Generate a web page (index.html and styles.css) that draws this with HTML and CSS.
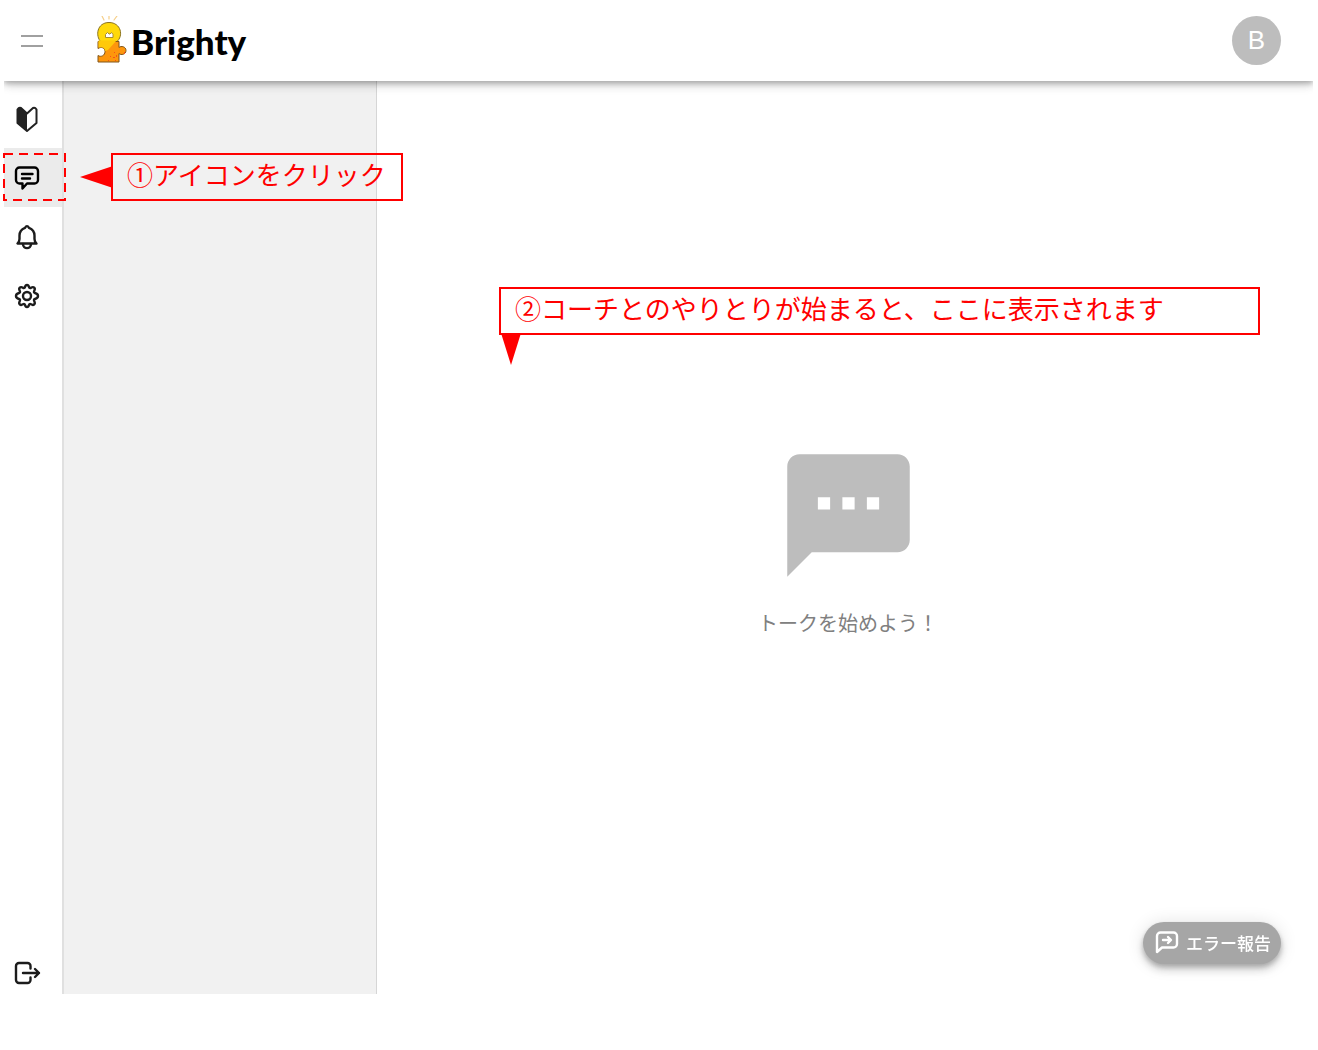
FILE: index.html
```
<!DOCTYPE html>
<html lang="ja">
<head>
<meta charset="UTF-8">
<meta name="viewport" content="width=device-width, initial-scale=1">
<title>Brighty</title>
<link rel="stylesheet" href="styles.css">
</head>
<body>

<div class="app">
  <header class="header">
    <button class="menu-btn" aria-label="メニュー">
      <span></span>
      <span></span>
    </button>
    <a class="logo" href="#">
      <svg class="logo-mark" viewBox="0 0 32 50" aria-hidden="true">
        <g stroke="#f6cf8a" stroke-width="1.2" stroke-linecap="round">
          <path d="M6 0l2 4M13 0v3M21 0l-3 4"/>
        </g>
        <path d="M5 26C-1 20 1 6.500 13 6.500S28 20 20.500 26z" fill="#ffd90a" stroke="#8a7320"/>
        <path d="M2 25.500H23v6c2-2 7-1 7 3s-5 5-7 3v8.500H2V39.500c3 2 7 0 7-4s-4-5-7-3z" fill="#fd960c" stroke="#80551a"/>
        <path d="M2.500 24.500h18L12 34 9 35q0-5-6.500-3.500z" fill="#ffc90a"/>
        <path d="M9.500 21.500v-3l2-2 1.500 1.500h1l1.500-1.500 1.500 2v3z" fill="#fff" stroke="#a58b35"/>
        <path d="M14 40h1v1h-1zM18 36h1v1h-1zM17 41h2v1h-2zM20 39h1v2h-1zM19 44h1v1h-1zM28 36h1v2h-1zM12 44h1v1h-1z" fill="#f4511e"/>
      </svg>
      <span class="logo-text">Brighty</span>
    </a>
    <button class="avatar">B</button>
  </header>

  <div class="body">
    <nav class="sidebar">
      <a class="nav-item" href="#" aria-label="はじめに">
        <svg viewBox="0 0 24 26">
          <path d="M2.500 3.500Q4 1 6 2l6 5.500L18 2q2-1 3.500 1.500V17L12 25 2.500 17z" fill="#fff" stroke="#222" stroke-width="2" stroke-linejoin="round"/>
          <path d="M2.500 3.500Q4 1 6 2l6 5.500V25L2.500 17z" fill="#222"/>
        </svg>
      </a>
      <a class="nav-item active" href="#" aria-label="トーク">
        <svg viewBox="0 0 24 26" class="line">
          <path d="M4.500 2.500h15a3.500 3.500 0 0 1 3.500 3.500v9a3.500 3.500 0 0 1-3.500 3.500H12L7.500 23.500v-5h-3A3.500 3.500 0 0 1 1 15V6a3.500 3.500 0 0 1 3.500-3.500z"/>
          <path d="M7 9h10.500M7 13.500h8"/>
        </svg>
      </a>
      <a class="nav-item" href="#" aria-label="お知らせ">
        <svg viewBox="0 0 24 26" class="line">
          <path d="M2.500 19.500h19q-2-2-2-4.500v-3.500c0-4-2.500-6.500-5.500-7.700Q12 .5 10 3.800C7 5 4.500 7.500 4.500 11.500V15q0 2.500-2 4.500z"/>
          <path d="M8 20c0 5.500 8 5.500 8 0"/>
        </svg>
      </a>
      <a class="nav-item" href="#" aria-label="設定">
        <svg viewBox="0 0 24 26" class="line">
          <path d="M12 2Q13.500 2 14 4q.5 1.500 2 .8 2-1.300 3.200-.1t0 3.300q-.7 1.500.8 2 3 .8 3 3t-3 3q-1.500.5-.8 2 1.200 2.100 0 3.300t-3.200 0q-1.500-.8-2 .7-.5 2-2 2t-2-2q-.5-1.500-2-.7-2 1.200-3.200 0t0-3.300q.7-1.500-.8-2-3-.8-3-3t3-3q1.500-.5.800-2-1.200-2.100 0-3.300t3.200.1q1.500.7 2-.8.500-2 2-2z"/>
          <circle cx="12" cy="13" r="4"/>
        </svg>
      </a>
      <a class="nav-item logout" href="#" aria-label="ログアウト">
        <svg viewBox="0 0 24 26" class="line">
          <path d="M15.500 8.500V6A3 3 0 0 0 12.500 3H4a3 3 0 0 0-3 3v14a3 3 0 0 0 3 3h8.500a3 3 0 0 0 3-3v-2.500"/>
          <path d="M8 13h16M20 9l4 4-4 4"/>
        </svg>
      </a>
      <svg class="marker" aria-hidden="true"><rect x="1" y="1" width="61" height="46"/></svg>
      <p class="callout callout-icon">①アイコンをクリック</p>
    </nav>

    <aside class="talk-list"></aside>

    <main class="talk">
      <p class="callout callout-talk">②コーチとのやりとりが始まると、ここに表示されます</p>
      <svg class="talk-icon" viewBox="0 0 24 24" aria-hidden="true">
        <path d="M20 2H4c-1.100 0-2 .9-2 2v18l4-4h14c1.100 0 2-.9 2-2V4c0-1.100-.9-2-2-2zM9 11H7V9h2v2zm4 0h-2V9h2v2zm4 0h-2V9h2v2z"/>
      </svg>
      <p class="talk-text">トークを始めよう！</p>
    </main>
  </div>
</div>

<button class="report">
  <svg viewBox="0 0 24 24" aria-hidden="true">
    <path d="M2 22V6a3.500 3.500 0 0 1 3.500-3.500h13A3.500 3.500 0 0 1 22 6v8a3.500 3.500 0 0 1-3.500 3.500H7z"/>
    <path d="M8 10h7.500M13 7l3 3-3 3"/>
  </svg>
  エラー報告
</button>

</body>
</html>
```
FILE: styles.css
```
* {
  box-sizing: border-box;
}
body {
  margin: 0;
  background: #fff;
  font-family: "Liberation Sans", "Noto Sans CJK JP", sans-serif;
}
p {
  margin: 0;
}
button {
  border: none;
  font-family: inherit;
  cursor: pointer;
}
.app {
  display: flex;
  flex-direction: column;
  min-height: calc(100vh - 56px);
  margin: 0 5px 56px 4px;
}

/* header */
.header {
  position: relative;
  z-index: 1;
  display: flex;
  align-items: center;
  height: 81px;
  padding: 0 32px 0 17px;
  background: #fff;
  box-shadow: 0 2px 5px rgba(0, 0, 0, 0.2), 0 4px 8px rgba(0, 0, 0, 0.14), 0 1px 14px rgba(0, 0, 0, 0.12);
  clip-path: inset(0 0 -20px 0);
}
.menu-btn {
  display: flex;
  flex-direction: column;
  gap: 8px;
  padding: 0;
  background: none;
}
.menu-btn span {
  width: 22px;
  height: 2px;
  background: #a0a0a0;
}
.logo {
  display: flex;
  align-items: center;
  gap: 3px;
  margin-left: 53px;
  color: #000;
  text-decoration: none;
}
.logo-mark {
  width: 32px;
  height: 50px;
  fill: none;
}
.logo-text {
  font-family: Lato, sans-serif;
  font-size: 35px;
  font-weight: 900;
  line-height: 48px;
}
.avatar {
  width: 49px;
  height: 49px;
  margin-left: auto;
  padding: 0;
  border-radius: 50%;
  background: #bdbdbd;
  color: #fff;
  font-size: 26px;
}

/* sidebar */
.body {
  flex: 1;
  display: flex;
}
.sidebar {
  position: relative;
  display: flex;
  flex-direction: column;
  width: 60px;
  padding-top: 8px;
  border-right: 2px solid #e0e0e0;
}
.nav-item {
  display: flex;
  align-items: center;
  height: 59px;
  padding-left: 11px;
}
.nav-item.active {
  background: #ebebeb;
}
.nav-item svg {
  width: 24px;
  height: 26px;
  overflow: visible;
}
.line {
  fill: none;
  stroke: #1c1c1c;
  stroke-width: 2.4;
  stroke-linecap: round;
  stroke-linejoin: round;
}
.active .line {
  stroke: #000;
}
.logout {
  height: 42px;
  margin-top: auto;
}
.talk-list {
  width: 313px;
  border-right: 1px solid #d6d6d6;
  background: #f1f1f1;
}

/* guide */
.marker {
  position: absolute;
  top: 72px;
  left: -1px;
  width: 63px;
  height: 48px;
}
.marker rect {
  fill: none;
  stroke: #f00;
  stroke-width: 2;
  stroke-dasharray: 9 6;
}
.callout {
  position: absolute;
  height: 48px;
  padding: 0 14px;
  border: 2px solid #f00;
  color: #f00;
  font-family: "Noto Sans CJK JP", sans-serif;
  font-size: 26px;
  line-height: 38px;
  white-space: nowrap;
}
.callout::before {
  content: "";
  position: absolute;
  background: #f00;
}
.callout-icon {
  top: 72px;
  left: 107px;
  width: 292px;
}
.callout-icon::before {
  top: 11px;
  right: 100%;
  width: 33px;
  height: 22px;
  clip-path: polygon(0 50%, 100% 0, 100% 100%);
}
.callout-talk {
  top: 206px;
  left: 122px;
  right: 53px;
}
.callout-talk::before {
  top: 100%;
  left: 0;
  width: 20px;
  height: 32px;
  clip-path: polygon(0 0, 100% 0, 50% 100%);
}

/* talk */
.talk {
  position: relative;
  flex: 1;
  display: flex;
  flex-direction: column;
  align-items: center;
  justify-content: center;
  gap: 20px;
  padding: 4px 0 0 6px;
}
.talk-icon {
  width: 147px;
  height: 147px;
  fill: #bdbdbd;
}
.talk-text {
  color: #808080;
  font-family: "Noto Sans CJK JP", sans-serif;
  font-size: 20px;
  line-height: 28px;
}
.report {
  position: fixed;
  right: 37px;
  bottom: 86px;
  display: flex;
  align-items: center;
  gap: 7px;
  height: 42px;
  padding: 0 10px 2px 12px;
  border-radius: 21px;
  background: #a6a6a6;
  box-shadow: 0 3px 5px rgba(0, 0, 0, 0.2), 0 6px 10px rgba(0, 0, 0, 0.14), 0 1px 18px rgba(0, 0, 0, 0.12);
  color: #fff;
  font-family: "Noto Sans CJK JP", sans-serif;
  font-size: 17px;
  font-weight: 500;
}
.report svg {
  width: 24px;
  height: 24px;
  fill: none;
  stroke: #fff;
  stroke-width: 2.4;
  stroke-linecap: round;
  stroke-linejoin: round;
}
```
